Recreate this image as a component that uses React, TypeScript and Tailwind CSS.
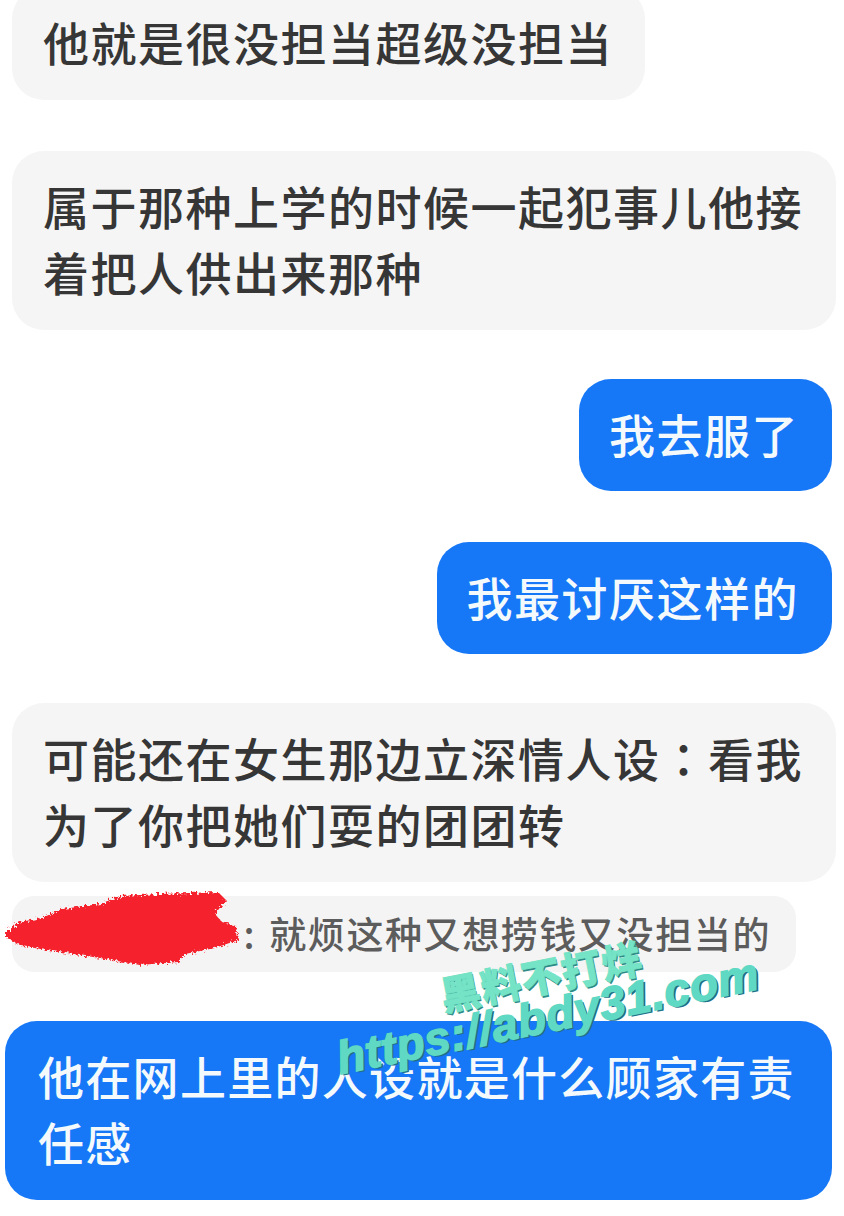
const cjk = "font-['Noto_Sans_CJK_SC','Noto_Sans',sans-serif]";

function Gray({ children, className = '' }: { children: React.ReactNode; className?: string }) {
  return (
    <div className={`rounded-[32px] bg-[#f5f5f5] pl-[31px] pr-[20px] pt-[21px] pb-[26px] text-[46px] leading-[66px] font-medium tracking-[1.5px] text-[#363636] ${className}`}>
      {children}
    </div>
  );
}

function Blue({ children, className = '' }: { children: React.ReactNode; className?: string }) {
  return (
    <div className={`self-end mr-[12px] rounded-[32px] bg-[#1677f7] pl-[30px] pr-[33px] pt-[21px] pb-[25px] text-[46px] leading-[66px] font-medium tracking-[1.5px] text-[#f4fafc] ${className}`}>
      {children}
    </div>
  );
}

function RedScribble() {
  return (
    <svg className="absolute left-0 top-[884px]" width="250" height="90" viewBox="0 0 250 90">
      <defs>
        <filter id="rough" x="-10%" y="-20%" width="120%" height="140%">
          <feTurbulence type="fractalNoise" baseFrequency="0.4" numOctaves="2" seed="4" />
          <feDisplacementMap in="SourceGraphic" scale="8" />
        </filter>
      </defs>
      <path
        d="M6 48 L20 38 L42 34 L62 25 L100 20 L120 12 L160 10 L218 8 L226 16 L215 30 L222 38 L236 42 L238 56 L215 64 L185 70 L178 78 L140 81 L100 74 L60 68 L22 62 L6 54 Z"
        fill="#f5222d"
        filter="url(#rough)"
      />
    </svg>
  );
}

export default function App() {
  return (
    <div className={`relative h-[1216px] w-[844px] overflow-hidden bg-white ${cjk}`}>
      <div className="flex flex-col -mt-[13px]">
        <Gray className="ml-[12px] self-start w-[633px] whitespace-nowrap">他就是很没担当超级没担当</Gray>
        <Gray className="ml-[12px] mt-[51px] w-[824px] whitespace-nowrap">
          属于那种上学的时候一起犯事儿他接
          <br />
          着把人供出来那种
        </Gray>
        <Blue className="mt-[49px]">我去服了</Blue>
        <Blue className="mt-[51px]">我最讨厌这样的</Blue>
        <Gray className="ml-[12px] mt-[49px] w-[824px] whitespace-nowrap">
          可能还在女生那边立深情人设<span className="font-['Noto_Sans_CJK_TC',sans-serif]">：</span>看我
          <br />
          为了你把她们耍的团团转
        </Gray>
        <div className="ml-[12px] mt-[14px] flex h-[76px] w-[784px] items-center justify-end rounded-[22px] bg-[#f4f4f4] pr-[25px] text-[37px] font-medium tracking-[1.6px] text-[#5c5c5c]">
          <span className="mr-[13px]">:</span>
          <span>就烦这种又想捞钱又没担当的</span>
        </div>
        <div className="ml-[5px] mt-[49px] w-[827px] whitespace-nowrap rounded-[32px] bg-[#1677f7] pl-[33px] pt-[21px] pb-[26px] text-[46px] leading-[66px] font-medium tracking-[1.3px] text-[#f4fafc]">
          他在网上里的人设就是什么顾家有责
          <br />
          任感
        </div>
      </div>

      <RedScribble />

      {/* watermark */}
      <div className="absolute left-[436px] top-[972px] -rotate-[11deg] origin-top-left whitespace-nowrap text-[40px] leading-[46px] font-black tracking-[1px] text-[#74e3c6] [-webkit-text-stroke:0.8px_#74e3c6] [text-shadow:1px_2px_0_#2f8a86]">
        黑料不打烊
      </div>
      <div className="absolute left-[332px] top-[1034px] -rotate-[11.5deg] origin-top-left whitespace-nowrap font-['Liberation_Sans',sans-serif] text-[46px] leading-[50px] font-bold italic tracking-[0.6px] text-[#5fd9c4] [-webkit-text-stroke:1.6px_#5fd9c4] [text-shadow:2px_2px_0_#1f6f86]">
        https://abdy31.com
      </div>
    </div>
  );
}
